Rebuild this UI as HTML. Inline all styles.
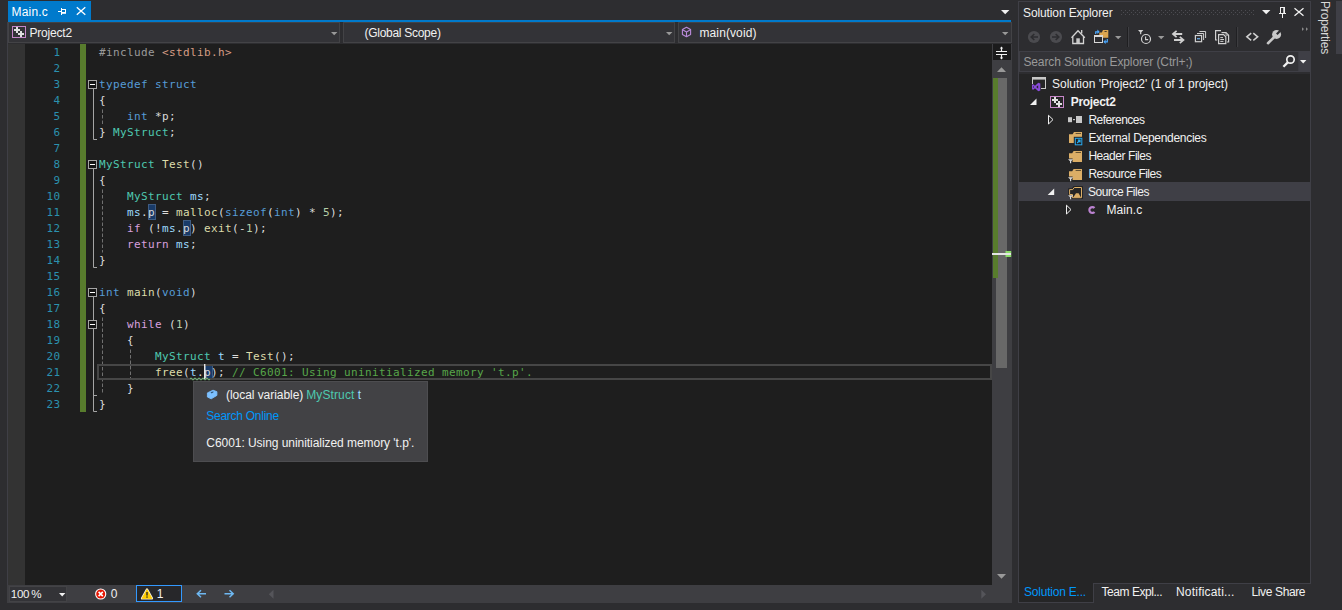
<!DOCTYPE html>
<html><head><meta charset="utf-8"><title>Main.c - Project2</title>
<style>
*{box-sizing:border-box;margin:0;padding:0}
html,body{width:1342px;height:610px;overflow:hidden;background:#2d2d30}
body{position:relative;font-family:"Liberation Sans",sans-serif;font-size:12px;color:#f1f1f1;line-height:16px;-webkit-font-smoothing:antialiased}
.a{position:absolute}
.t{position:absolute;white-space:pre;line-height:16px;height:16px}
svg{position:absolute;overflow:visible}
/* editor */
#tab{left:8px;top:1px;width:83px;height:19px;background:#007acc}
#tabline{left:8px;top:20px;width:1003.3px;height:2px;background:#007acc}
.dd{top:22px;height:21.3px;background:#333337;border:1px solid #434346}
#editor{left:8px;top:44px;width:984px;height:541px;background:#1e1e1e}
#margin{left:0;top:0;width:17px;height:541px;background:#333333}
#green{left:72.3px;top:0;width:5.5px;height:368px;background:#587c2d}
.ln{position:absolute;left:17px;width:35.4px;text-align:right;color:#2b91af}
.code,.ln{font-family:"DejaVu Sans Mono","Liberation Mono",monospace;font-size:11px;letter-spacing:0.375px;line-height:16px;height:16px;white-space:pre;margin-top:1px}
.code{position:absolute;left:91px;color:#dcdcdc}
.k{color:#569cd6}.ty{color:#4ec9b0}.s{color:#d69d85}.c{color:#57a64a}.ck{color:#d8a0df}.pp{color:#9b9b9b}.n{color:#b5cea8}.f{color:#dcdcaa}.v{color:#9cdcfe}.m{color:#dadada}
.hl{}
.hb{position:absolute;width:7.9px;height:16.3px;background:#193b69;border:1px solid #3f5c82}

/* scrollbars */
#vsb{left:992px;top:44px;width:20px;height:541px;background:#3e3e42}
#split{left:993px;top:44px;width:18px;height:16px;background:#1b1b1c}
#thumb{left:996px;top:78px;width:11px;height:290px;background:#686868}
#vgreen{left:993.3px;top:78px;width:4.4px;height:199.8px;background:#587c2d}
#hbar{left:7px;top:585px;width:1005px;height:18px;background:#3e3e42}
#zoom{left:9px;top:586px;width:58px;height:16px;background:#333337;border:1px solid #434346}
/* solution explorer */
#se{left:1018px;top:1px;width:293px;height:582.5px;border:1px solid #3f3f46;background:#2d2d30}
#setree{left:1019px;top:74px;width:291px;height:508.5px;background:#252526}
#search{left:1019px;top:51px;width:291px;height:21px;background:#333337;border:1px solid #3f3f46}
#sel{left:1019px;top:182px;width:291px;height:18.8px;background:#3f3f46}
.row{position:absolute;white-space:pre;line-height:18px;height:18px;color:#f1f1f1}
#setab{left:1018px;top:582.5px;width:76px;height:20.5px;background:#252526;border:1px solid #3f3f46;border-top:none}
#propbar{left:1336px;top:1px;width:6px;height:53px;background:#3f3f46}
#prop{left:1317.4px;top:1.3px;width:16px;writing-mode:vertical-rl;white-space:pre;line-height:16px;color:#d8d8d8;letter-spacing:-0.17px}
/* tooltip */
#tip{left:193px;top:380.5px;width:235px;height:81px;background:#424245;border:1px solid #4d4d50}
</style></head>
<body>
<!-- document tab well -->
<div id="tab" class="a"></div>
<div class="t" style="left:11.5px;top:3.6px;color:#fff;letter-spacing:0.2px">Main.c</div>
<div id="tabline" class="a"></div>
<!-- navigation bar -->
<div class="a dd" style="left:8px;width:332px"></div>
<div class="a dd" style="left:343px;width:332px"></div>
<div class="a dd" style="left:678px;width:333.7px"></div>
<div class="t" style="left:29.5px;top:25px;letter-spacing:-0.2px">Project2</div>
<div class="t" style="left:364.5px;top:25px;letter-spacing:-0.28px">(Global Scope)</div>
<div class="t" style="left:699.5px;top:25px;letter-spacing:0.1px">main(void)</div>
<div class="a" style="left:7px;top:22px;width:1px;height:581px;background:#3f3f46"></div>
<!-- editor -->
<div id="editor" class="a">
<div id="margin" class="a"></div>
<div id="green" class="a"></div>
<div class="hb" style="left:139.7px;top:159.8px"></div><div class="hb" style="left:174.7px;top:175.8px"></div><div class="hb" style="left:196.7px;top:319.8px;height:15.4px"></div>
<div id="lines">
<div class="ln" style="top:0px">1</div>
<div class="code" style="top:0px"><span class="pp">#include</span> <span class="s">&lt;stdlib.h&gt;</span></div>
<div class="ln" style="top:16px">2</div>
<div class="ln" style="top:32px">3</div>
<div class="code" style="top:32px"><span class="k">typedef</span> <span class="k">struct</span></div>
<div class="ln" style="top:48px">4</div>
<div class="code" style="top:48px">{</div>
<div class="ln" style="top:64px">5</div>
<div class="code" style="top:64px">    <span class="k">int</span> *<span class="m">p</span>;</div>
<div class="ln" style="top:80px">6</div>
<div class="code" style="top:80px">} <span class="ty">MyStruct</span>;</div>
<div class="ln" style="top:96px">7</div>
<div class="ln" style="top:112px">8</div>
<div class="code" style="top:112px"><span class="ty">MyStruct</span> <span class="f">Test</span>()</div>
<div class="ln" style="top:128px">9</div>
<div class="code" style="top:128px">{</div>
<div class="ln" style="top:144px">10</div>
<div class="code" style="top:144px">    <span class="ty">MyStruct</span> <span class="v">ms</span>;</div>
<div class="ln" style="top:160px">11</div>
<div class="code" style="top:160px">    <span class="v">ms</span>.<span class="m">p</span> = <span class="f">malloc</span>(<span class="k">sizeof</span>(<span class="k">int</span>) * <span class="n">5</span>);</div>
<div class="ln" style="top:176px">12</div>
<div class="code" style="top:176px">    <span class="ck">if</span> (!<span class="v">ms</span>.<span class="m">p</span>) <span class="f">exit</span>(-<span class="n">1</span>);</div>
<div class="ln" style="top:192px">13</div>
<div class="code" style="top:192px">    <span class="ck">return</span> <span class="v">ms</span>;</div>
<div class="ln" style="top:208px">14</div>
<div class="code" style="top:208px">}</div>
<div class="ln" style="top:224px">15</div>
<div class="ln" style="top:240px">16</div>
<div class="code" style="top:240px"><span class="k">int</span> <span class="f">main</span>(<span class="k">void</span>)</div>
<div class="ln" style="top:256px">17</div>
<div class="code" style="top:256px">{</div>
<div class="ln" style="top:272px">18</div>
<div class="code" style="top:272px">    <span class="ck">while</span> (<span class="n">1</span>)</div>
<div class="ln" style="top:288px">19</div>
<div class="code" style="top:288px">    {</div>
<div class="ln" style="top:304px">20</div>
<div class="code" style="top:304px">        <span class="ty">MyStruct</span> <span class="v">t</span> = <span class="f">Test</span>();</div>
<div class="ln" style="top:320px">21</div>
<div class="code" style="top:320px">        <span class="f">free</span>(<span class="v">t</span>.<span class="m">p</span>); <span class="c">// C6001: Using uninitialized memory 't.p'.</span></div>
<div class="ln" style="top:336px">22</div>
<div class="code" style="top:336px">    }</div>
<div class="ln" style="top:352px">23</div>
<div class="code" style="top:352px">}</div>
</div>
</div>

<!-- vertical scrollbar -->
<div id="vsb" class="a"></div>
<div id="split" class="a"></div>
<div id="thumb" class="a"></div>
<div id="vgreen" class="a"></div>
<!-- bottom bar -->
<div id="hbar" class="a"></div>
<div id="zoom" class="a"></div>
<div class="t" style="left:10.7px;top:586px;font-size:11.6px;letter-spacing:-0.25px;word-spacing:-1px">100 %</div>
<div class="t" style="left:110.8px;top:586px">0</div>
<div class="a" style="left:136px;top:585px;width:46px;height:17px;border:1px solid #3399ff;background:#27272a"></div>
<div class="t" style="left:156.8px;top:586px">1</div>
<!-- solution explorer -->
<div id="se" class="a"></div>
<div class="t" style="left:1023px;top:5px;letter-spacing:-0.11px">Solution Explorer</div>
<div id="search" class="a"></div>
<div class="t" style="left:1023.4px;top:54px;color:#999999;letter-spacing:-0.12px">Search Solution Explorer (Ctrl+;)</div>
<div id="setree" class="a"></div>
<div id="sel" class="a"></div>
<div class="row" style="left:1052px;top:75px">Solution 'Project2' (1 of 1 project)</div>
<div class="row" style="left:1070.8px;top:93px;font-weight:bold;letter-spacing:-0.33px">Project2</div>
<div class="row" style="left:1088.4px;top:111px;letter-spacing:-0.53px">References</div>
<div class="row" style="left:1088.4px;top:129px;letter-spacing:-0.29px">External Dependencies</div>
<div class="row" style="left:1088.4px;top:147px;letter-spacing:-0.44px">Header Files</div>
<div class="row" style="left:1088.4px;top:165px;letter-spacing:-0.52px">Resource Files</div>
<div class="row" style="left:1088px;top:183px;letter-spacing:-0.48px">Source Files</div>
<div class="row" style="left:1106.5px;top:201px;letter-spacing:0.06px">Main.c</div>
<div id="setab" class="a"></div>
<div class="t" style="left:1024px;top:584px;color:#0097fb;letter-spacing:-0.21px">Solution E...</div>
<div class="t" style="left:1101.5px;top:584px;letter-spacing:-0.45px">Team Expl...</div>
<div class="t" style="left:1176px;top:584px;letter-spacing:0.2px">Notificati...</div>
<div class="t" style="left:1251.5px;top:584px;letter-spacing:-0.37px">Live Share</div>
<!-- right auto-hide strip -->
<div id="propbar" class="a"></div>
<div id="prop" class="a">Properties</div>
<!-- quick info tooltip -->
<div id="tip" class="a"></div>
<div class="t" style="left:226px;top:387px;letter-spacing:-0.05px">(local variable) <span style="color:#4ec9b0;margin-left:-0.4px;letter-spacing:0.13px">MyStruct</span><span style="color:#9cdcfe;margin-left:-0.1px"> t</span></div>
<div class="t" style="left:206.3px;top:408px;color:#0097fb;letter-spacing:-0.27px">Search Online</div>
<div class="t" style="left:206.3px;top:435.4px;letter-spacing:-0.05px">C6001: Using uninitialized memory 't.p'.</div>

<!-- icon overlay: editor chrome -->
<svg id="ov1" style="left:0;top:0" width="1342" height="610" viewBox="0 0 1342 610">
<!-- tab pin + close -->
<g fill="#ffffff">
<rect x="58" y="11" width="3" height="1"/><rect x="61" y="8" width="1" height="7"/>
<rect x="62" y="9" width="4" height="1"/><rect x="65" y="9" width="1" height="4"/><rect x="62" y="12" width="4" height="1.8"/>
</g>
<path d="M76.8 7.3 L85.3 14.8 M85.3 7.3 L76.8 14.8" stroke="#ffffff" stroke-width="1.3" fill="none"/>
<!-- tab overflow -->
<path d="M1001 10 h8.4 l-4.2 4.3 z" fill="#f1f1f1"/>
<!-- nav bar project icon -->
<rect x="12.5" y="26.5" width="13" height="11" fill="none" stroke="#c586c8" stroke-width="1"/>
<g fill="#e0e0e0"><rect x="14" y="29" width="6" height="2"/><rect x="16" y="27" width="2" height="6"/><rect x="18" y="33" width="6" height="2"/><rect x="20" y="31" width="2" height="6"/></g>
<!-- nav dropdown arrows -->
<g fill="#999999"><path d="M331 32 h6.4 l-3.2 3.3 z"/><path d="M666 32 h6.4 l-3.2 3.3 z"/><path d="M1002 32 h6.4 l-3.2 3.3 z"/></g>
<!-- member cube icon -->
<g fill="none" stroke="#b98ad9" stroke-width="1.1" stroke-linejoin="round"><path d="M686.5 27.3 L690.6 29.6 V34.4 L686.5 36.7 L682.4 34.4 V29.6 Z"/><path d="M682.6 29.8 L686.5 32 L690.4 29.8 M686.5 32 V36.5"/></g>
<!-- splitter -->
<g stroke="#f1f1f1" stroke-width="1.2" fill="#f1f1f1"><path d="M996 51.5 H1007 M996 54.5 H1007" fill="none"/><path d="M1001.5 51 V47.5 M1001.5 55 V58.5" fill="none"/><path d="M999.8 48.6 L1001.5 46.6 L1003.2 48.6 Z M999.8 57.4 L1001.5 59.4 L1003.2 57.4 Z" stroke="none"/></g>
<!-- scrollbar arrows -->
<path d="M997 72 L1001.5 67.3 L1006 72 Z" fill="#999999"/>
<path d="M997 574 L1001.5 578.7 L1006 574 Z" fill="#999999"/>
<path d="M273.5 589.7 V598.7 L268.8 594.2 Z" fill="#55555a"/>
<path d="M981.3 589.7 V598.7 L986 594.2 Z" fill="#55555a"/>
<!-- caret marker on scrollbar -->
<rect x="1005.5" y="251" width="5.7" height="6" fill="#8bdc6a"/>
<rect x="992" y="253" width="19" height="2" fill="#e4e4e4"/>
<!-- outlining -->
<g fill="#141414" stroke="#a5a5a5" stroke-width="1">
<rect x="88.5" y="80.5" width="8" height="8"/><rect x="88.5" y="160.5" width="8" height="8"/><rect x="88.5" y="288.5" width="8" height="8"/><rect x="88.5" y="320.5" width="8" height="8"/>
</g>
<g fill="#ffffff"><rect x="90" y="84" width="5" height="1"/><rect x="90" y="164" width="5" height="1"/><rect x="90" y="292" width="5" height="1"/><rect x="90" y="324" width="5" height="1"/></g>
<g fill="none" stroke="#a5a5a5" stroke-width="1">
<path d="M93.5 89 V139.5 H97"/><path d="M93.5 169 V267.5 H97"/><path d="M93.5 297 V320 M93.5 329 V411.5 H97 M93.5 395.5 H97"/>
</g>
<!-- indent guides -->
<g fill="none" stroke="#707070" stroke-width="1" stroke-dasharray="3.5 2">
<path d="M102.5 109.5 V124.5"/><path d="M102.5 189.5 V252.5"/><path d="M102.5 317.5 V394"/><path d="M130.5 349.5 V380"/>
</g>
<!-- current line -->
<rect x="98" y="365" width="893" height="14" fill="none" stroke="#464646" stroke-width="2"/>
<!-- caret -->
<rect x="204" y="364" width="1.4" height="15" fill="#e8e8e8"/>
<!-- squiggle -->
<path d="M190 379 l1 -1.2 l2 2.4 l2 -2.4 l2 2.4 l2 -2.4 l2 2.4 l2 -2.4 l2 2.4 l2 -2.4 l2 2.4 l1 -1.2" fill="none" stroke="#74c67a" stroke-width="0.9" stroke-linejoin="round"/>
<!-- bottom bar -->
<path d="M59 593 h6.4 l-3.2 3.4 z" fill="#f1f1f1"/>
<circle cx="100.7" cy="594" r="5.6" fill="#ffffff"/><circle cx="100.7" cy="594" r="4.5" fill="#e51400"/>
<path d="M98.6 591.9 L102.8 596.1 M102.8 591.9 L98.6 596.1" stroke="#ffffff" stroke-width="1.6" fill="none"/>
<path d="M147 589.6 L151.9 598.4 H142.1 Z" fill="#ffcc00" stroke="#f4f0e4" stroke-width="2.4" stroke-linejoin="round"/><path d="M147 589.6 L151.9 598.4 H142.1 Z" fill="#ffcc00" stroke="#ffcc00" stroke-width="0.8" stroke-linejoin="round"/>
<rect x="146.35" y="592" width="1.3" height="3.6" fill="#1e1e1e"/><rect x="146.35" y="596.4" width="1.3" height="1.3" fill="#1e1e1e"/>
<g fill="none" stroke="#6eb8f2" stroke-width="1.5"><path d="M206 593.8 H197.5 M201 590.3 L197.3 593.8 L201 597.3"/><path d="M224.5 593.8 H233 M229.5 590.3 L233.2 593.8 L229.5 597.3"/></g>
</svg>

<!-- icon overlay: solution explorer -->
<svg id="ov2" style="left:0;top:0" width="1342" height="610" viewBox="0 0 1342 610">
<defs><pattern id="grip" x="1121" y="10" width="4" height="4" patternUnits="userSpaceOnUse"><rect x="0" y="0" width="1" height="1" fill="#4c4c51"/><rect x="2" y="2" width="1" height="1" fill="#4c4c51"/></pattern></defs>
<rect x="1121" y="10" width="133" height="5" fill="url(#grip)"/>
<!-- title buttons -->
<path d="M1262 10 h8.4 l-4.2 4.3 z" fill="#f1f1f1"/>
<g fill="#f1f1f1"><rect x="1280" y="7" width="5" height="1"/><rect x="1280" y="7" width="1" height="6"/><rect x="1283.3" y="7" width="1.7" height="6"/><rect x="1279" y="13" width="7" height="1"/><rect x="1282" y="14" width="1" height="4"/></g>
<path d="M1294.5 8.3 L1303.5 15.8 M1303.5 8.3 L1294.5 15.8" stroke="#f1f1f1" stroke-width="1.3" fill="none"/>
<!-- back / forward -->
<circle cx="1034" cy="37" r="6.1" fill="#4b4b4f"/><path d="M1038 37 H1031.5 M1034.3 34 L1031.2 37 L1034.3 40" stroke="#2d2d30" stroke-width="1.6" fill="none"/>
<circle cx="1056" cy="37" r="6.1" fill="#4b4b4f"/><path d="M1052 37 H1058.5 M1055.7 34 L1058.8 37 L1055.7 40" stroke="#2d2d30" stroke-width="1.6" fill="none"/>
<!-- home -->
<g fill="none" stroke="#d4d4d4" stroke-width="1.3"><path d="M1071.5 37.8 L1078 30.8 L1084.8 37.8"/><path d="M1072.8 37 V43.5 H1083.5 V37"/><path d="M1081.7 33.5 V30"/></g>
<rect x="1076.3" y="38.3" width="3.5" height="5" fill="#c8c8c8"/>
<!-- sync with active document -->
<path d="M1103 30 h5.3 v7.8 h-9 v-5.3 h2.5 z" fill="#dba550"/><rect x="1104.5" y="31" width="2.2" height="0.9" fill="#3a3426"/>
<rect x="1094" y="35" width="9" height="8" fill="#2d2d30"/><rect x="1094.5" y="36" width="8" height="6.5" fill="#2d2d30" stroke="#d8d8d8" stroke-width="1"/><rect x="1094" y="35" width="9" height="2" fill="#d8d8d8"/>
<g fill="none" stroke="#4aa8ff" stroke-width="1.2"><path d="M1095.7 34 V31.8 H1098.5"/><path d="M1107.3 39 V41.8 H1104.5"/></g>
<path d="M1097.4 29.6 L1099.6 31.8 L1097.4 34 Z" fill="#4aa8ff"/><path d="M1105.6 39.6 L1103.4 41.8 L1105.6 44 Z" fill="#4aa8ff"/>
<path d="M1115 36 h6.4 l-3.2 3.3 z" fill="#999999"/>
<!-- separators -->
<rect x="1127" y="27" width="1.1" height="20" fill="#1f1f21"/><rect x="1128.1" y="27" width="0.8" height="20" fill="#46464a"/>
<rect x="1236.2" y="27" width="1.1" height="20" fill="#1f1f21"/><rect x="1237.3" y="27" width="0.8" height="20" fill="#46464a"/>
<!-- pending changes filter -->
<path d="M1138 30 H1143.4 L1141.3 32.2 V34.3 H1140.1 V32.2 Z" fill="#d4d4d4"/>
<circle cx="1146" cy="39" r="4.5" fill="none" stroke="#d4d4d4" stroke-width="1.2"/><path d="M1145.6 36.5 V39.6 H1148.2" fill="none" stroke="#d4d4d4" stroke-width="1.1"/>
<path d="M1158 36 h6.4 l-3.2 3.3 z" fill="#999999"/>
<!-- sync arrows -->
<g fill="none" stroke="#d0d0d0"><path d="M1173.6 34 H1182.2 M1174 40 H1182.8" stroke-width="2"/><path d="M1176.6 30.8 L1172.9 34 L1176.6 37.2 M1179.8 36.8 L1183.5 40 L1179.8 43.2" stroke-width="1.7"/></g>
<!-- collapse all -->
<g fill="none" stroke="#d0d0d0" stroke-width="1"><rect x="1195.4" y="35.5" width="6.2" height="6.2" stroke-width="1.2"/><path d="M1197 33.5 H1203.6 V40"/><path d="M1199.4 31.5 H1205.6 V38"/></g>
<rect x="1197" y="38.2" width="3" height="1.1" fill="#75beff"/>
<!-- show all files -->
<g fill="none" stroke="#d0d0d0" stroke-width="1.2"><path d="M1221 30.7 H1215.6 V40 H1217.2"/><path d="M1221.5 32.6 H1226 L1228.6 35.2 V42 H1227"/><path d="M1226 32.6 V35.2 H1228.6" stroke-width="0.8"/><path d="M1218.6 34.6 H1223.6 L1225.8 36.8 V43.6 H1218.6 Z" fill="#2d2d30"/><path d="M1220.3 37.6 H1223 M1220.3 39.5 H1224 M1220.3 41.4 H1223.4" stroke-width="1"/></g>
<!-- view code -->
<path d="M1251.2 33.2 L1246.8 36.8 L1251.2 40.4 M1253.3 33.2 L1257.7 36.8 L1253.3 40.4" fill="none" stroke="#d0d0d0" stroke-width="1.5"/>
<!-- properties wrench -->
<path d="M1274.3 37 L1268 43.2" stroke="#c8c8c8" stroke-width="2.6" stroke-linecap="round" fill="none"/>
<circle cx="1276.6" cy="34.4" r="4.5" fill="#c8c8c8"/><path d="M1276.8 34.2 L1281.5 29.5" stroke="#2d2d30" stroke-width="2.2" fill="none"/>
<!-- toolbar overflow -->
<path d="M1302 27.2 V31 L1304 29.1 Z M1306 27.2 V31 L1308 29.1 Z" fill="#8a8a8a"/>
<!-- search -->
<rect x="1298.3" y="52" width="11.7" height="19" fill="#3f3f46"/>
<path d="M1300 60 h6.4 l-3.2 3.4 z" fill="#f1f1f1"/>
<circle cx="1290.5" cy="59.5" r="3.7" fill="none" stroke="#f1f1f1" stroke-width="1.7"/><path d="M1287.8 62.4 L1283.4 66.8" stroke="#f1f1f1" stroke-width="2.3" fill="none"/>
<!-- tree: solution -->
<g fill="#c8c8c8"><rect x="1032" y="77" width="14" height="2.6"/><rect x="1032" y="77" width="1" height="7"/><rect x="1045" y="77" width="1" height="12"/><rect x="1041" y="88" width="5" height="1"/></g>
<path d="M1040.3 83.4 V90.6 L1038.3 91.3 L1035 88.3 L1033.2 89.8 L1032 89.2 V84.8 L1033.2 84.2 L1035 85.7 L1038.3 82.7 Z M1038.2 85.3 L1036.2 87 L1038.2 88.7 Z M1033.1 86 L1034.1 87 L1033.1 88 Z" fill="#8a4bdc" fill-rule="evenodd"/>
<!-- tree: expanders -->
<g fill="#f1f1f1"><path d="M1030 105 H1036.5 V98.5 Z"/><path d="M1047.7 195 H1054.2 V188.5 Z"/></g>
<g fill="none" stroke="#f1f1f1" stroke-width="1"><path d="M1048.5 115.3 V124 L1053 119.6 Z"/><path d="M1066.5 205.2 V214 L1071 209.6 Z"/></g>
<!-- tree: project -->
<rect x="1050.5" y="96.5" width="13" height="11" fill="none" stroke="#c586c8" stroke-width="1"/>
<g fill="#e0e0e0"><rect x="1052" y="99" width="6" height="2"/><rect x="1054" y="97" width="2" height="6"/><rect x="1056" y="103" width="6" height="2"/><rect x="1058" y="101" width="2" height="6"/></g>
<!-- tree: references -->
<g fill="#c8c8c8"><rect x="1068" y="117.2" width="4" height="5"/><rect x="1073" y="119" width="2" height="1.2"/><rect x="1076" y="116" width="6" height="7"/></g>
<!-- tree: external dependencies -->
<path d="M1074 132 H1082 V143 H1069 V134.3 H1072.6 Z" fill="#dcae66"/><rect x="1075.6" y="133" width="5.4" height="0.8" fill="#4a3d26"/>
<rect x="1073.8" y="136.8" width="9.4" height="9.4" fill="#252526"/><rect x="1075.3" y="138.3" width="6.5" height="6.5" fill="#1e1e1e" stroke="#29aaf0" stroke-width="1"/><path d="M1077.2 143 L1080 140.2 M1077.8 140.2 H1080 V142.4" fill="none" stroke="#2cb1f5" stroke-width="1.2"/>
<!-- tree: filter folders -->
<g id="ff1"><path d="M1073.6 151 H1082 V162 H1072.6 V158.6 H1069 V153.3 H1072.2 Z" fill="#dcae66"/><rect x="1075.6" y="152" width="5.4" height="0.8" fill="#4a3d26"/><path d="M1068 159.2 H1073.2 L1071.2 161.3 V163.2 H1070 V161.3 Z" fill="#d8d8d8"/></g>
<g><path d="M1073.6 169 H1082 V180 H1072.6 V176.6 H1069 V171.3 H1072.2 Z" fill="#dcae66"/><rect x="1075.6" y="170" width="5.4" height="0.8" fill="#4a3d26"/><path d="M1068 177.2 H1073.2 L1071.2 179.3 V181.2 H1070 V179.3 Z" fill="#d8d8d8"/></g>
<!-- tree: open folder -->
<path d="M1074.3 187.5 H1081.5 V197.7 H1072.5 V194.5 H1069.6 V189.6 H1072.7 Z" fill="#252526" stroke="#222224" stroke-width="2.8"/>
<path d="M1074.3 187.5 H1081.5 V197.7 H1072.5 V194.5 H1069.6 V189.6 H1072.7 Z" fill="#252526" stroke="#dcae66" stroke-width="1"/>
<path d="M1073.2 197.5 L1076 193.2 H1078.6 L1081 197.5 Z" fill="#dcae66"/>
<path d="M1068 195.2 H1073.2 L1071.2 197.3 V199.2 H1070 V197.3 Z" fill="#d8d8d8"/>
<!-- tree: c file -->
<path d="M1094.5 208 A2.95 2.95 0 1 0 1094.5 212" fill="none" stroke="#bb82d0" stroke-width="2.2"/>
<!-- tooltip icon -->
<path d="M207.4 392.9 L213 390.2 L216.9 391.7 V395.4 L211.2 398.8 L207.4 397 Z" fill="#7cc0ff" stroke="#7cc0ff" stroke-width="0.9" stroke-linejoin="round"/><ellipse cx="212.2" cy="392.3" rx="1.6" ry="0.7" fill="#2f567c" transform="rotate(-18 212.2 392.3)"/>
</svg>
</body></html>
